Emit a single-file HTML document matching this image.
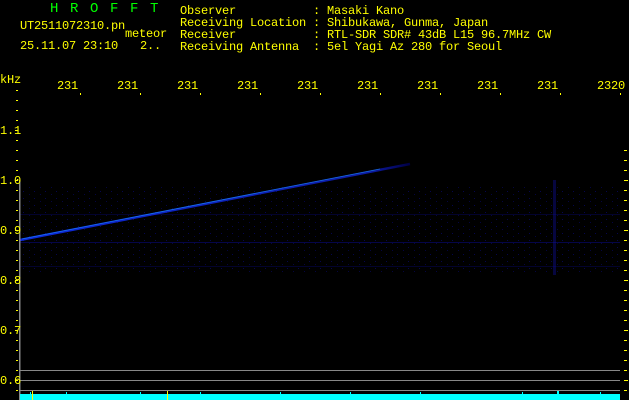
<!DOCTYPE html>
<html><head><style>
html,body{margin:0;padding:0;background:#000;width:629px;height:400px;overflow:hidden}
.t{position:absolute;font-family:"Liberation Mono",monospace;color:#ffff00;font-size:12px;line-height:12px;white-space:pre;letter-spacing:-0.2px}
</style></head><body>
<div style="position:relative;width:629px;height:400px">
<svg width="629" height="400" style="position:absolute;left:0;top:0">
<defs>
<linearGradient id="g" x1="0" y1="0" x2="1" y2="0"><stop offset="0" stop-color="#1030ff"/><stop offset="0.9" stop-color="#1020c0"/><stop offset="1" stop-color="#000050"/></linearGradient>
<pattern id="n" width="11" height="7" patternUnits="userSpaceOnUse"><rect x="1" y="2" width="1" height="1" fill="#0a0a80"/><rect x="7" y="5" width="1" height="1" fill="#08086a"/></pattern>
</defs>
<rect x="20" y="185" width="600" height="90" fill="url(#n)" opacity="0.6"/>
<rect x="20" y="242" width="600" height="1" fill="#0a0a90" opacity="0.5"/>
<rect x="20" y="214" width="600" height="1" fill="#0a0a80" opacity="0.35"/>
<rect x="20" y="266" width="600" height="1" fill="#0a0a80" opacity="0.35"/>
<rect x="553" y="180" width="3" height="95" fill="#1010a0" opacity="0.4"/>
<line x1="20" y1="240" x2="410" y2="164" stroke="url(#g)" stroke-width="2.5" opacity="0.85"/>
<line x1="22" y1="239" x2="380" y2="169" stroke="#20a0ff" stroke-width="0.8" opacity="0.6"/>
<rect x="19" y="180" width="1.5" height="220" fill="#888"/>
<g fill="#ffff00">
<rect x="16" y="90" width="2" height="1"/><rect x="16" y="100" width="2" height="1"/><rect x="16" y="110" width="2" height="1"/><rect x="16" y="120" width="2" height="1"/><rect x="15" y="130" width="3" height="1"/>
<rect x="16" y="140" width="2" height="1"/><rect x="16" y="150" width="2" height="1"/><rect x="16" y="160" width="2" height="1"/><rect x="16" y="170" width="2" height="1"/><rect x="15" y="180" width="3" height="1"/>
<rect x="16" y="190" width="2" height="1"/><rect x="16" y="200" width="2" height="1"/><rect x="16" y="210" width="2" height="1"/><rect x="16" y="220" width="2" height="1"/><rect x="15" y="230" width="3" height="1"/>
<rect x="16" y="240" width="2" height="1"/><rect x="16" y="250" width="2" height="1"/><rect x="16" y="260" width="2" height="1"/><rect x="16" y="270" width="2" height="1"/><rect x="15" y="280" width="3" height="1"/>
<rect x="16" y="290" width="2" height="1"/><rect x="16" y="300" width="2" height="1"/><rect x="16" y="310" width="2" height="1"/><rect x="16" y="320" width="2" height="1"/><rect x="15" y="330" width="3" height="1"/>
<rect x="16" y="340" width="2" height="1"/><rect x="16" y="350" width="2" height="1"/><rect x="16" y="360" width="2" height="1"/><rect x="16" y="370" width="2" height="1"/><rect x="15" y="380" width="3" height="1"/><rect x="16" y="390" width="2" height="1"/>
</g>
<g fill="#ffff00">
<rect x="624" y="150" width="3" height="1"/><rect x="624" y="160" width="3" height="1"/><rect x="624" y="170" width="3" height="1"/><rect x="624" y="180" width="4" height="1"/><rect x="624" y="190" width="3" height="1"/><rect x="624" y="200" width="3" height="1"/><rect x="624" y="210" width="3" height="1"/><rect x="624" y="220" width="3" height="1"/><rect x="624" y="230" width="4" height="1"/><rect x="624" y="240" width="3" height="1"/><rect x="624" y="250" width="3" height="1"/><rect x="624" y="260" width="3" height="1"/><rect x="624" y="270" width="3" height="1"/><rect x="624" y="280" width="4" height="1"/><rect x="624" y="290" width="3" height="1"/><rect x="624" y="300" width="3" height="1"/><rect x="624" y="310" width="3" height="1"/><rect x="624" y="320" width="3" height="1"/><rect x="624" y="330" width="4" height="1"/><rect x="624" y="340" width="3" height="1"/><rect x="624" y="350" width="3" height="1"/><rect x="624" y="360" width="3" height="1"/><rect x="624" y="370" width="3" height="1"/><rect x="624" y="380" width="4" height="1"/><rect x="624" y="390" width="3" height="1"/>
<rect x="80" y="93" width="1" height="2"/><rect x="140" y="93" width="1" height="2"/><rect x="200" y="93" width="1" height="2"/><rect x="260" y="93" width="1" height="2"/><rect x="320" y="93" width="1" height="2"/><rect x="380" y="93" width="1" height="2"/><rect x="440" y="93" width="1" height="2"/><rect x="500" y="93" width="1" height="2"/><rect x="560" y="93" width="1" height="2"/><rect x="620" y="93" width="1" height="2"/>
</g>
<rect x="20" y="370" width="600" height="1" fill="#888"/>
<rect x="20" y="380" width="600" height="1" fill="#888"/>
<rect x="20" y="390" width="600" height="1" fill="#888"/>
<rect x="20" y="394" width="600" height="6" fill="#00ffff"/>
<g fill="#00ffff"><rect x="30" y="392" width="1" height="2"/><rect x="66" y="392" width="1" height="2"/><rect x="140" y="392" width="1" height="2"/><rect x="200" y="392" width="1" height="2"/><rect x="280" y="392" width="1" height="2"/><rect x="350" y="392" width="1" height="2"/><rect x="420" y="392" width="1" height="2"/><rect x="522" y="392" width="1" height="2"/><rect x="557" y="391" width="2" height="3"/><rect x="600" y="392" width="1" height="2"/></g>
<rect x="32" y="391" width="1" height="9" fill="#ffff00"/>
<rect x="167" y="391" width="1" height="9" fill="#ffff00"/>
</svg>
<div class="t" style="left:50px;top:3px;color:#00ff00;font-size:14px;letter-spacing:11.6px">HROFFT</div>
<div class="t" style="left:20px;top:20px">UT2511072310.pn</div>
<div class="t" style="left:125px;top:28px">meteor</div>
<div class="t" style="left:20px;top:40px">25.11.07 23:10</div>
<div class="t" style="left:140px;top:40px">2..</div>
<div class="t" style="left:180px;top:5px">Observer           : Masaki Kano
Receiving Location : Shibukawa, Gunma, Japan
Receiver           : RTL-SDR SDR# 43dB L15 96.7MHz CW
Receiving Antenna  : 5el Yagi Az 280 for Seoul</div>
<div class="t" style="left:0px;top:74px">kHz</div>
<div class="t" style="left:57px;top:80px">231</div><div class="t" style="left:117px;top:80px">231</div><div class="t" style="left:177px;top:80px">231</div><div class="t" style="left:237px;top:80px">231</div><div class="t" style="left:297px;top:80px">231</div><div class="t" style="left:357px;top:80px">231</div><div class="t" style="left:417px;top:80px">231</div><div class="t" style="left:477px;top:80px">231</div><div class="t" style="left:537px;top:80px">231</div><div class="t" style="left:597px;top:80px">2320</div>
<div class="t" style="left:0px;top:125px">1.1</div>
<div class="t" style="left:0px;top:175px">1.0</div>
<div class="t" style="left:0px;top:225px">0.9</div>
<div class="t" style="left:0px;top:275px">0.8</div>
<div class="t" style="left:0px;top:325px">0.7</div>
<div class="t" style="left:0px;top:375px">0.6</div>
</div>
</body></html>
